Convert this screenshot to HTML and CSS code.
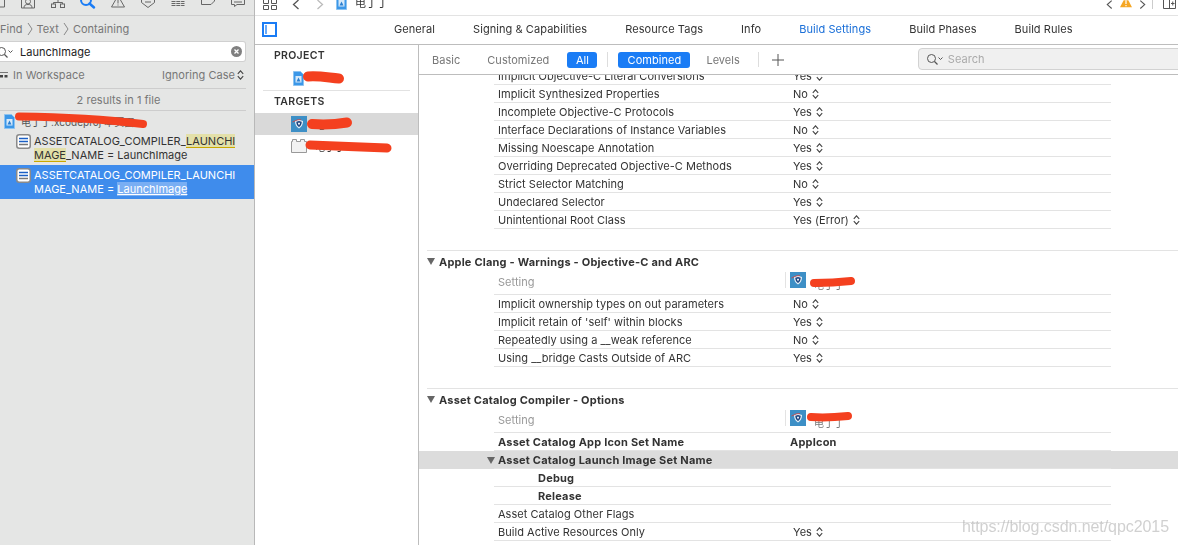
FILE: index.html
```html
<!DOCTYPE html>
<html lang="en">
<head>
<meta charset="utf-8">
<title>Build Settings</title>
<link rel="stylesheet" href="styles.css">
</head>
<body>
<svg class="defs" aria-hidden="true">
  <symbol id="updown" viewBox="0 0 7 10"><path d="M.8 3.800 3.500.8l2.700 3M.8 6.200l2.700 3 2.700-3" fill="none" stroke="#444" stroke-width="1.100"/></symbol>
  <symbol id="appicon" viewBox="0 0 16 16"><rect width="16" height="16" fill="#3d8fc6"/><path d="M4 5 8 3.800 12 5c0 3.400-1 5.600-4 7.500C5 10.600 4 8.400 4 5z" fill="#e8f1f8"/><path d="M5.300 5.800 8 5l2.700.8c0 2.300-.7 3.900-2.700 5.200-2-1.300-2.700-2.900-2.700-5.200z" fill="#163f7c"/><path d="M6.700 6.800h2.600L8 9.600z" fill="#fff"/><path d="M1.500 6 6.500 3.800 10 3.600" fill="none" stroke="#d8413a" stroke-width=".8"/></symbol>
  <symbol id="fileicon" viewBox="0 0 11 15"><path d="M.5.500h7l3 3v11H.5z" fill="#3b97e8" stroke="#8dc3f0"/><rect x="2.500" y="5" width="6" height="6.500" fill="#d5e9fa"/><path d="M3.500 10.500 5.500 6.500l2 4z" fill="#2a7fd0"/></symbol>
  <symbol id="settingsdoc" viewBox="0 0 15 15"><rect x=".75" y=".75" width="13.500" height="13.500" rx="2.500" fill="#fff" stroke="#8a8a8a" stroke-width="1.500"/><path d="M3 4.500h9M3 7.500h9" stroke="#1b5fc4" stroke-width="1.700"/><path d="M3 10.500h9" stroke="#777" stroke-width="1.500"/></symbol>
  <symbol id="magnifier" viewBox="0 0 17 12"><circle cx="5.500" cy="5.500" r="4" fill="none" stroke="#555" stroke-width="1"/><path d="m8.500 8.500 3 3" stroke="#555" stroke-width="1.200"/><path d="m12.500 4.500 2 2 2-2" fill="none" stroke="#555" stroke-width="1"/></symbol>
  <symbol id="crumb" viewBox="0 0 6 14"><path d="M1 1l4 6-4 6" fill="none" stroke="#888" stroke-width="1"/></symbol>
</svg>

<div class="app">
  <aside class="navigator">
    <div class="nav-icons">
      <svg class="nav-icon" viewBox="0 0 14 15"><path d="M.5 0v7h13V0" fill="none" stroke="#666"/></svg>
      <svg class="nav-icon" viewBox="0 0 14 15"><path d="M.5 0v8h13V0" fill="none" stroke="#666"/><circle cx="7" cy="1.500" r="2.500" fill="none" stroke="#666"/><path d="M3 8c0-3 1.500-3.500 4-3.500S11 5 11 8" fill="none" stroke="#666"/></svg>
      <svg class="nav-icon" viewBox="0 0 14 15"><path d="M7 0v2.500M2.500 4V2.500h9V4" fill="none" stroke="#666"/><rect x=".5" y="4" width="4" height="3.500" fill="none" stroke="#666"/><rect x="9.500" y="4" width="4" height="3.500" fill="none" stroke="#666"/></svg>
      <svg class="nav-icon nav-icon-wide" viewBox="0 0 16 15"><circle cx="6" cy="0" r="5" fill="none" stroke="#1a7cf5" stroke-width="2"/><path d="m9.500 3.500 4.500 4" stroke="#1a7cf5" stroke-width="2.500" stroke-linecap="round"/></svg>
      <svg class="nav-icon" viewBox="0 0 14 15"><path d="M4.500 0 .5 7h13L9.500 0" fill="none" stroke="#666"/><path d="M7 0v3.500M7 4.500v1" stroke="#666"/></svg>
      <svg class="nav-icon" viewBox="0 0 14 15"><path d="M.5 0v2.500L7 7.500l6.500-5V0" fill="none" stroke="#666"/><path d="M4 2h6" stroke="#666"/></svg>
      <svg class="nav-icon" viewBox="0 0 14 15"><path d="M.5 1.500h13M.5 3.500h13M.5 5.500h13" fill="none" stroke="#666" stroke-dasharray="4 .8"/></svg>
      <svg class="nav-icon" viewBox="0 0 14 15"><path d="M.5 0v4.500h9.500L13.500 1V0" fill="none" stroke="#666"/></svg>
      <svg class="nav-icon" viewBox="0 0 14 15"><path d="M.5 0v4.500h3v2l2.500-2h7.500V0" fill="none" stroke="#666"/><path d="M3 2h8" stroke="#666"/></svg>
    </div>

    <div class="find-path">
      <span>Find</span><svg class="crumb"><use href="#crumb"/></svg><span>Text</span><svg class="crumb"><use href="#crumb"/></svg><span>Containing</span>
    </div>

    <div class="find-field">
      <svg class="find-glass"><use href="#magnifier"/></svg>
      <span class="find-value">LaunchImage</span>
      <svg class="find-clear" viewBox="0 0 11 11"><circle cx="5.500" cy="5.500" r="5.500" fill="#808080"/><path d="m3.500 3.500 4 4m0-4-4 4" stroke="#fff" stroke-width="1.300"/></svg>
    </div>

    <div class="scope">
      <span class="scope-left"><svg class="scope-icon" viewBox="0 0 8 7"><path d="M0 .5h8" stroke="#777"/><rect x="0" y="3" width="3" height="2.500" fill="#444"/><rect x="4.500" y="3" width="3" height="2.500" fill="#444"/></svg>In Workspace</span>
      <span class="scope-right">Ignoring Case<svg class="updown updown-nav"><use href="#updown"/></svg></span>
    </div>

    <div class="result-count">2 results in 1 file</div>

    <div class="result-file">
      <svg class="result-file-icon"><use href="#fileicon"/></svg>
      <span class="result-file-name">电丁丁.xcodeproj 本页面</span>
    </div>

    <div class="result">
      <svg class="result-icon"><use href="#settingsdoc"/></svg>
      <p class="result-text">ASSETCATALOG_COMPILER_<mark class="hit">LAUNCHI</mark><br><mark class="hit">MAGE</mark>_NAME = LaunchImage</p>
    </div>
    <div class="result result-selected">
      <svg class="result-icon"><use href="#settingsdoc"/></svg>
      <p class="result-text">ASSETCATALOG_COMPILER_LAUNCHI<br>MAGE_NAME = <mark class="hit-selected">LaunchImage</mark></p>
    </div>
  </aside>

  <main class="editor">
    <div class="jump-bar">
      <svg class="jump-grid" viewBox="0 0 14 10"><path d="M.5 0v3.500h5V0M8.500 0v3.500h5V0M.5 5.500h5v4h-5zM8.500 5.500h5v4h-5z" fill="none" stroke="#555"/></svg>
      <svg class="jump-chev" viewBox="0 0 8 10"><path d="M6.500 0 1.500 4.500l5 4.500" fill="none" stroke="#555" stroke-width="1.300"/></svg>
      <svg class="jump-chev jump-chev-fwd" viewBox="0 0 8 10"><path d="M1.500 0l5 4.500-5 4.500" fill="none" stroke="#bbb" stroke-width="1.300"/></svg>
      <svg class="jump-file"><use href="#fileicon"/></svg>
      <span class="jump-title">电丁丁</span>
      <span class="jump-right">
        <svg class="jump-chev" viewBox="0 0 8 10"><path d="M6.500 0 1.500 4.500l5 4.500" fill="none" stroke="#555" stroke-width="1.300"/></svg>
        <svg class="jump-warn" viewBox="0 0 13 8"><path d="M4 0 0 7.500h13L9 0z" fill="#f5a623"/><path d="M6.500 0v4M6.500 5v1.500" stroke="#fff" stroke-width="1.300"/></svg>
        <svg class="jump-chev" viewBox="0 0 8 10"><path d="M1.500 0l5 4.500-5 4.500" fill="none" stroke="#555" stroke-width="1.300"/></svg>
        <span class="jump-divider"></span>
        <svg class="jump-add" viewBox="0 0 13 9"><path d="M.5 0v8.500h12V0M6.500 0v8.500M8 3.500h3.500M9.750 1.500v4" fill="none" stroke="#555"/></svg>
      </span>
    </div>

    <div class="tabs">
      <svg class="panel-toggle" viewBox="0 0 15 15"><rect x="1" y="1" width="13" height="13" fill="#fff" stroke="#1a7cf5" stroke-width="2"/><path d="M4 3v9" stroke="#1a7cf5" stroke-width="1.300"/></svg>
      <span>General</span>
      <span>Signing &amp; Capabilities</span>
      <span>Resource Tags</span>
      <span>Info</span>
      <span class="tab-active">Build Settings</span>
      <span>Build Phases</span>
      <span>Build Rules</span>
    </div>

    <div class="editor-body">
      <div class="targets">
        <div class="targets-title">PROJECT</div>
        <div class="targets-item targets-item-project"><svg class="targets-file"><use href="#fileicon"/></svg></div>
        <div class="targets-sep"></div>
        <div class="targets-title">TARGETS</div>
        <div class="targets-item targets-item-selected"><svg class="targets-icon"><use href="#appicon"/></svg><span class="targets-name">电</span></div>
        <div class="targets-item"><svg class="targets-icon" viewBox="0 0 16 14"><path d="M.5 13.500v-11h1V.5h4v2h4V.5h4v2h2v11z" fill="#f2f2f2" stroke="#999"/></svg><span class="targets-name">电丁丁</span></div>
      </div>

      <div class="settings">
        <div class="filters">
          <span class="filter">Basic</span>
          <span class="filter filter-custom">Customized</span>
          <span class="pill pill-all">All</span>
          <span class="filter-divider"></span>
          <span class="pill pill-combined">Combined</span>
          <span class="filter filter-levels">Levels</span>
          <span class="filter-divider filter-divider-levels"></span>
          <svg class="filter-plus" viewBox="0 0 12 12"><path d="M6 0v12M0 6h12" stroke="#555"/></svg>
          <div class="search">
            <svg class="search-glass"><use href="#magnifier"/></svg>
            <span>Search</span>
          </div>
        </div>

        <div class="table">
          <section class="group group-clipped">
            <div class="row"><span class="cell-name">Implicit Objective-C Literal Conversions</span><span class="cell-value">Yes<svg class="updown"><use href="#updown"/></svg></span></div>
            <div class="row"><span class="cell-name">Implicit Synthesized Properties</span><span class="cell-value">No<svg class="updown"><use href="#updown"/></svg></span></div>
            <div class="row"><span class="cell-name">Incomplete Objective-C Protocols</span><span class="cell-value">Yes<svg class="updown"><use href="#updown"/></svg></span></div>
            <div class="row"><span class="cell-name">Interface Declarations of Instance Variables</span><span class="cell-value">No<svg class="updown"><use href="#updown"/></svg></span></div>
            <div class="row"><span class="cell-name">Missing Noescape Annotation</span><span class="cell-value">Yes<svg class="updown"><use href="#updown"/></svg></span></div>
            <div class="row"><span class="cell-name">Overriding Deprecated Objective-C Methods</span><span class="cell-value">Yes<svg class="updown"><use href="#updown"/></svg></span></div>
            <div class="row"><span class="cell-name">Strict Selector Matching</span><span class="cell-value">No<svg class="updown"><use href="#updown"/></svg></span></div>
            <div class="row"><span class="cell-name">Undeclared Selector</span><span class="cell-value">Yes<svg class="updown"><use href="#updown"/></svg></span></div>
            <div class="row"><span class="cell-name">Unintentional Root Class</span><span class="cell-value">Yes (Error)<svg class="updown"><use href="#updown"/></svg></span></div>
          </section>

          <section class="group">
            <h2 class="group-title"><span class="triangle"></span>Apple Clang - Warnings - Objective-C and ARC</h2>
            <div class="row row-head"><span class="cell-name">Setting</span><span class="cell-target"><svg class="targets-icon"><use href="#appicon"/></svg><span class="cell-target-name">电丁丁</span></span></div>
            <div class="row"><span class="cell-name">Implicit ownership types on out parameters</span><span class="cell-value">No<svg class="updown"><use href="#updown"/></svg></span></div>
            <div class="row"><span class="cell-name">Implicit retain of 'self' within blocks</span><span class="cell-value">Yes<svg class="updown"><use href="#updown"/></svg></span></div>
            <div class="row"><span class="cell-name">Repeatedly using a __weak reference</span><span class="cell-value">No<svg class="updown"><use href="#updown"/></svg></span></div>
            <div class="row"><span class="cell-name">Using __bridge Casts Outside of ARC</span><span class="cell-value">Yes<svg class="updown"><use href="#updown"/></svg></span></div>
          </section>

          <section class="group">
            <h2 class="group-title"><span class="triangle"></span>Asset Catalog Compiler - Options</h2>
            <div class="row row-head"><span class="cell-name">Setting</span><span class="cell-target"><svg class="targets-icon"><use href="#appicon"/></svg><span class="cell-target-name">电丁丁</span></span></div>
            <div class="row row-bold"><span class="cell-name">Asset Catalog App Icon Set Name</span><span class="cell-value cell-value-bold">AppIcon</span></div>
            <div class="row-band"><div class="row row-bold"><span class="cell-name"><span class="triangle triangle-row"></span>Asset Catalog Launch Image Set Name</span></div></div>
            <div class="row row-bold"><span class="cell-name cell-name-sub">Debug</span></div>
            <div class="row row-bold"><span class="cell-name cell-name-sub">Release</span></div>
            <div class="row"><span class="cell-name">Asset Catalog Other Flags</span></div>
            <div class="row"><span class="cell-name">Build Active Resources Only</span><span class="cell-value">Yes<svg class="updown"><use href="#updown"/></svg></span></div>
          </section>
        </div>
      </div>
    </div>
  </main>

  <svg class="scribbles" viewBox="0 0 1178 545" aria-hidden="true">
    <g fill="none" stroke="#f4401f" stroke-linecap="round">
      <path d="M19 116.500C60 117 110 120 143 124" stroke-width="8"/>
      <path d="M308 76.500C320 75.500 330 78 339 78.500" stroke-width="10"/>
      <path d="M312 124C325 125 338 124 347 122.500" stroke-width="10"/>
      <path d="M310 145C340 146 365 147 387 148" stroke-width="9"/>
      <path d="M814 283C830 283 842 282 851 281" stroke-width="8"/>
      <path d="M811 417C825 418 838 417 848 416" stroke-width="8"/>
    </g>
  </svg>
  <div class="watermark">https://blog.csdn.net/qpc2015</div>
</div>
</body>
</html>
```

FILE: styles.css
```css
* { box-sizing: border-box; }
html, body { margin: 0; height: 100%; }
body {
  background: #fff;
  color: #333;
  font-family: Inter, "Noto Sans CJK SC", sans-serif;
  font-size: 11px;
  letter-spacing: .03px;
  overflow: hidden;
}
.defs { width: 0; height: 0; display: block; }
.app {
  position: relative;
  display: flex;
  width: 1178px;
  height: 545px;
  overflow: hidden;
  filter: blur(.35px);
}

/* Navigator */
.navigator {
  flex: 0 0 255px;
  background: #e5e6e5;
  border-right: 1px solid #b8b8b8;
  overflow: hidden;
}
.nav-icons {
  display: flex;
  gap: 16px;
  height: 16px;
  margin-left: -9px;
  border-bottom: 1px solid #cdcdcd;
}
.nav-icon { flex: 0 0 14px; width: 14px; height: 15px; }
.nav-icon-wide { flex-basis: 16px; width: 16px; margin: 0 -1px; }
.find-path {
  display: flex;
  align-items: center;
  height: 25px;
  padding-top: 1px;
  color: #777;
}
.crumb { width: 6px; height: 14px; margin: 0 4px; }
.find-field {
  display: flex;
  align-items: center;
  width: 246px;
  height: 21px;
  background: #fff;
  border: 1px solid #d0d0d0;
  border-left: 0;
  border-radius: 0 3px 3px 0;
}
.find-glass { width: 17px; height: 12px; margin-left: -4px; }
.find-value { margin-left: 7px; color: #222; flex: 1; }
.find-clear { width: 11px; height: 11px; margin-right: 3px; }
.scope {
  display: flex;
  justify-content: space-between;
  align-items: center;
  width: 246px;
  height: 27px;
  padding-right: 2px;
  border-bottom: 1px solid #cdcdcd;
  color: #777;
}
.scope-left, .scope-right { display: flex; align-items: center; }
.scope-icon { width: 8px; height: 7px; margin-right: 5px; }
.updown { width: 7px; height: 10px; margin-left: 4px; vertical-align: -1px; }
.updown-nav { margin-left: 2px; }
.result-count {
  display: flex;
  align-items: center;
  justify-content: center;
  width: 246px;
  height: 22px;
  padding-right: 9px;
  border-bottom: 1px solid #cdcdcd;
  color: #777;
}
.result-file {
  display: flex;
  align-items: center;
  height: 20px;
  padding-left: 4px;
}
.result-file-icon { width: 11px; height: 15px; }
.result-file-name { margin-left: 6px; color: #555; font-size: 10px; }
.result {
  display: flex;
  height: 34px;
  padding: 3px 0 0 16px;
}
.result-icon { flex: 0 0 15px; width: 15px; height: 15px; }
.result-text { margin: 0 0 0 3px; line-height: 14px; letter-spacing: 0; color: #333; white-space: nowrap; }
.hit {
  background: #e3e0a9;
  color: #333;
  box-shadow: inset 0 -1px 0 #c9a800;
}
.result-selected { background: #3f8cec; color: #fff; }
.result-selected .result-text { color: #fff; }
.hit-selected {
  background: #79aef3;
  color: #fff;
  text-decoration: underline;
}

/* Editor */
.editor { flex: 1; min-width: 0; display: flex; flex-direction: column; }
.jump-bar {
  display: flex;
  align-items: flex-start;
  height: 16px;
  padding-left: 8px;
  border-bottom: 1px solid #e3e3e3;
  overflow: hidden;
}
.jump-grid { width: 14px; height: 10px; }
.jump-chev { width: 8px; height: 10px; margin-left: 15px; }
.jump-chev-fwd { margin-left: 16px; }
.jump-file { width: 11px; height: 15px; margin: -5px 0 0 12px; }
.jump-title { margin: -6px 0 0 8px; font-size: 11px; color: #333; }
.jump-right { display: flex; align-items: flex-start; margin-left: auto; padding-right: 2px; }
.jump-right .jump-chev { margin-left: 0; width: 7px; }
.jump-warn { width: 12px; height: 8px; margin: 0 7px 0 7px; }
.jump-divider { width: 1px; height: 9px; margin: 0 10px 0 6px; background: #ccc; }
.jump-add { width: 13px; height: 9px; }
.tabs {
  display: flex;
  align-items: center;
  gap: 38px;
  height: 29px;
  padding: 0 0 2px 7px;
  border-bottom: 1px solid #bdbdbd;
  color: #333;
  letter-spacing: .07px;
}
.panel-toggle { width: 15px; height: 15px; margin-right: 79px; }
.tab-active { color: #1a6fd8; }

.editor-body { flex: 1; display: flex; min-height: 0; }
.targets {
  flex: 0 0 164px;
  border-right: 1px solid #bdbdbd;
}
.targets-title {
  height: 22px;
  padding: 4px 0 0 19px;
  font-weight: 600;
  font-size: 10.500px;
  letter-spacing: .3px;
  color: #333;
}
.targets-item { display: flex; align-items: center; height: 22px; padding-left: 36px; }
.targets-item-project { height: 23px; padding-left: 38px; }
.targets-file { width: 11px; height: 15px; }
.targets-sep { height: 1px; margin: 0 8px; background: #e2e2e2; }
.targets-item-selected { background: #d9d9d9; }
.targets-icon { width: 16px; height: 16px; flex: none; }
.targets-name { margin-left: 8px; font-size: 10px; }

.settings { flex: 1; min-width: 0; display: flex; flex-direction: column; }
.filters {
  display: flex;
  align-items: center;
  flex: none;
  height: 30px;
  padding-left: 13px;
  border-bottom: 1px solid #bdbdbd;
  color: #777;
}
.filter-custom { margin-left: 27px; }
.pill {
  display: flex;
  align-items: center;
  justify-content: center;
  height: 16px;
  margin-left: 18px;
  border-radius: 3px;
  background: #1a7cf5;
  color: #fff;
}
.pill-all { width: 30px; }
.pill-combined { width: 72px; margin-left: 10px; }
.filter-divider { width: 1px; height: 15px; margin-left: 10px; background: #ddd; }
.filter-levels { margin-left: 16px; }
.filter-divider-levels { margin-left: 18px; }
.filter-plus { width: 12px; height: 12px; margin-left: 13px; }
.search {
  display: flex;
  align-items: center;
  flex: 1;
  height: 22px;
  margin: -2px -1px 0 134px;
  padding-left: 7px;
  background: #f0f0f0;
  border: 1px solid #d2d2d2;
  border-radius: 4px 0 0 4px;
  color: #aaa;
}
.search-glass { width: 17px; height: 12px; margin-right: 5px; }

.table { flex: 1; min-height: 0; overflow: hidden; }
.group {
  margin: 0 0 21px 8px;
  border-top: 1px solid #e3e3e3;
}
.group-clipped { margin-top: -8px; border-top: 0; }
.group-title {
  display: flex;
  align-items: center;
  height: 21px;
  margin: 0;
  font-size: 11px;
  font-weight: 700;
  letter-spacing: .2px;
  color: #333;
}
.triangle {
  width: 0;
  height: 0;
  margin: 0 4px 0 0;
  border-left: 4px solid transparent;
  border-right: 4px solid transparent;
  border-top: 7px solid #666;
}
.triangle-row { display: inline-block; margin: 0 3px 0 -11px; }
.row {
  display: flex;
  align-items: center;
  width: 617px;
  height: 18px;
  margin-left: 67px;
  border-bottom: 1px solid #e3e3e3;
}
.cell-name { flex: 0 0 299px; padding-left: 4px; white-space: nowrap; }
.cell-name-sub { padding-left: 44px; }
.cell-value { display: flex; align-items: center; }
.row-bold { font-weight: 700; letter-spacing: .2px; }
.cell-value-bold { margin-left: -3px; }
.row-head { height: 23px; padding-bottom: 2px; color: #999; }
.row-head .cell-name { flex-basis: 291px; }
.cell-target {
  display: flex;
  align-items: center;
  height: 16px;
  margin-top: -5px;
  padding-left: 4px;
  border-left: 1px solid #e3e3e3;
}
.cell-target-name { margin: 9px 0 0 8px; font-size: 10px; color: #777; }
.row-band { margin-left: -8px; background: #dcdcdc; }
.row-band .row { margin-left: 75px; }

/* Overlays */
.scribbles {
  position: absolute;
  left: 0;
  top: 0;
  width: 1178px;
  height: 545px;
  pointer-events: none;
}
.watermark {
  position: absolute;
  left: 962px;
  top: 518px;
  font-family: "Liberation Sans", sans-serif;
  font-size: 16px;
  letter-spacing: -.07px;
  line-height: 18px;
  color: rgba(170, 170, 170, .55);
  white-space: nowrap;
}
```
